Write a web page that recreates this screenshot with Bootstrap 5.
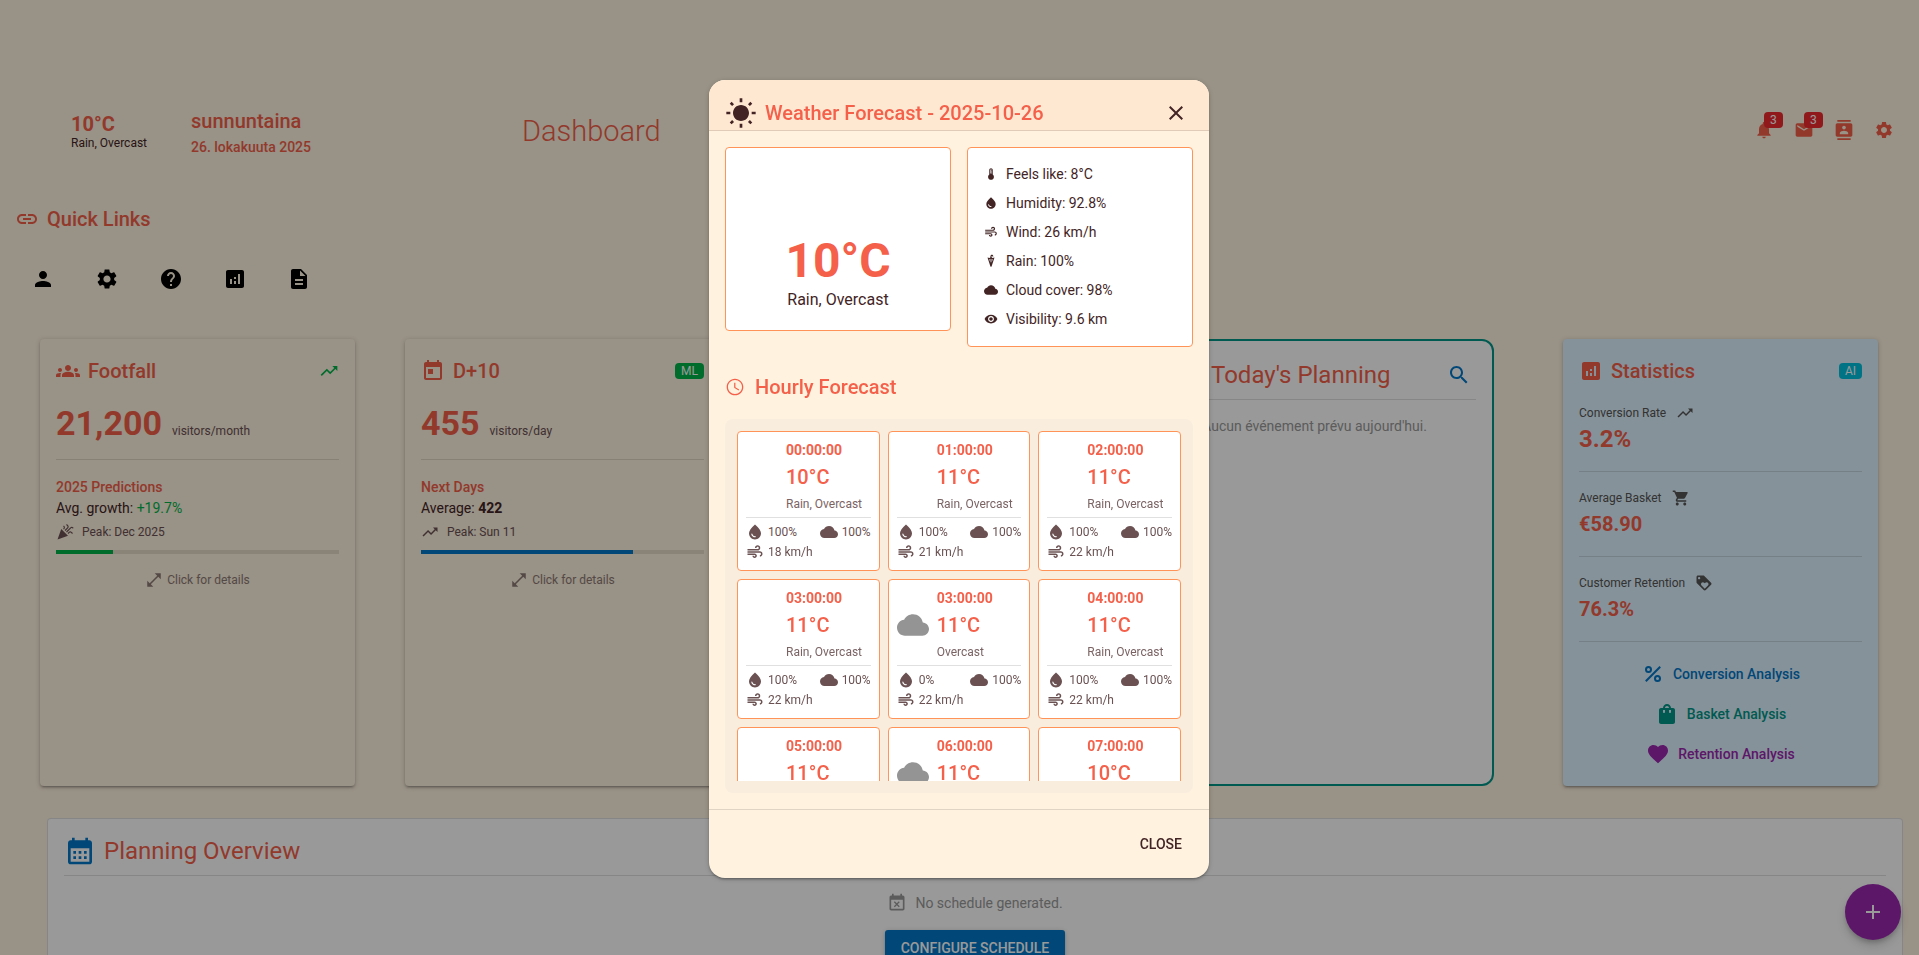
<!DOCTYPE html>
<html lang="en">
<head>
<meta charset="utf-8">
<meta name="viewport" content="width=device-width, initial-scale=1">
<title>Dashboard</title>
<link href="https://cdn.jsdelivr.net/npm/bootstrap@5.3.0/dist/css/bootstrap.min.css" rel="stylesheet">
<style>
:root{--coral:#f4604a;--ink:#432425;--ink-soft:#6b5152;--cream:#fff3e0;--line:rgba(0,0,0,.12);--teal:#009688;--blue:#0277c8;--green:#00b548;--orange:#ff9358}
body{font-family:Roboto,"Liberation Sans",sans-serif;font-size:14px;line-height:20px;color:var(--ink);background:var(--cream);overflow:hidden}
.ico{width:24px;height:24px;fill:currentColor;flex:none;display:block}
.ico-14{width:14px;height:14px}
.ico-18{width:18px;height:18px}
.ico-20{width:20px;height:20px}
.ico-32{width:32px;height:32px}
.plain-btn{background:none;border:0;padding:0;color:inherit;display:flex}
.coral{color:var(--coral)}
.green{color:var(--green)}
.blue{color:var(--blue)}
.teal{color:var(--teal)}
.purple{color:#9c27b0}
.gap-10{gap:10px}
.fs-12{font-size:12px}
.w-500{font-weight:500}
.title-20{font-size:20px;line-height:32px;font-weight:500;margin:0}
.title-24{font-size:24px;line-height:32px;font-weight:400;margin:0}
.soft{color:var(--ink-soft)}
.hint{color:#8d7a74}
.grey{color:#999}
.rule{border:0;border-top:1px solid #000;opacity:.12;margin:0}
.topbar{padding:102px 25px 0 15px;height:158px}
.topbar h1{font-size:29px;line-height:40px;font-weight:300;margin:0 0 0 209px;padding-top:2px}
.weather-chip{width:160px;padding:10px 8px 6px 56px;border-radius:8px;background:rgba(255,250,225,.3);line-height:16px}
.weather-chip b{font-size:20px;line-height:22px;font-weight:700}
.day-block{margin-left:16px;width:122px;padding-top:2px}
.counter{position:absolute;top:-8px;left:10px;padding:2px 6px;font-size:12px;line-height:12px;font-weight:400;border-radius:4px;background:#f02a2e;color:#fff}
.quick-head{padding:45px 15px 0}
.quick-row{padding:32px 31px 0;gap:40px;color:#000}
.board{display:grid;grid-template-columns:315fr 315fr 315fr 378fr 315fr;gap:50px;padding:48px 41px 0 40px}
.tile{min-height:447px;border-radius:4px;padding:16px;background:var(--cream);box-shadow:0 1px 5px rgba(0,0,0,.2),0 2px 2px rgba(0,0,0,.14),0 3px 1px -2px rgba(0,0,0,.12)}
.big-number{font-size:34px;line-height:40px;font-weight:700}
.trend-list{padding:17px 0 6px;line-height:21px}
.trend-list .peak{line-height:24px;margin-top:1px}
.tag{font-size:12px;line-height:12px;padding:2px 6px;border-radius:4px;color:#fff}
.today{background:#fff;border:2px solid var(--teal);border-radius:12px;padding:16px;margin-right:19px}
.today-head{height:36px;margin-bottom:6px;padding-right:5px}
.today-head h2{margin-left:26px}
.stats{background:#dff3ff;padding-bottom:11px}
.stats .label{color:#555;line-height:20px}
.stats-links{padding-top:12px}
.meter{height:4px;border-radius:0;background:rgba(0,0,0,.1)}
.link-btn{height:40px;font-weight:500;text-decoration:none;display:flex;align-items:center;justify-content:center;gap:8px}
.overview{margin:32px 16px 0 47px;padding:16px;background:#fff;border:1px solid rgba(0,0,0,.12);border-radius:4px;height:240px}
.empty-note{height:22px}
.cta{background:#0277c8;color:#fff;border-radius:3px;font-weight:500;font-size:14px;padding:7px 16px;line-height:22px;border:0;box-shadow:0 1px 5px rgba(0,0,0,.2),0 2px 2px rgba(0,0,0,.14)}
.fab{position:fixed;right:18px;bottom:15px;width:56px;height:56px;border-radius:50%;border:0;background:#9c27b0;color:#fff;display:flex;align-items:center;justify-content:center;box-shadow:0 3px 5px -1px rgba(0,0,0,.2),0 6px 10px rgba(0,0,0,.14)}
.modal-backdrop{--bs-backdrop-opacity:.4}
.modal{padding-right:1px}
.forecast{margin-top:80px}
.forecast .modal-content{background:var(--cream);border:0;border-radius:16px;color:var(--ink);box-shadow:0 1px 5px rgba(0,0,0,.2),0 2px 2px rgba(0,0,0,.14),0 3px 1px -2px rgba(0,0,0,.12)}
.forecast .modal-header{background:#ffe8d2;border-radius:16px 16px 0 0;padding:17px 21px 1px 16px;border-bottom:1px solid var(--line)}
.forecast .modal-body{padding:16px}
.forecast .modal-footer{padding:16px;height:69px;border-top:1px solid var(--line)}
.boxed{background:#fff;border:1px solid var(--orange);border-radius:4px}
.now{height:184px;padding-bottom:14px}
.now strong{font-size:48px;line-height:46px}
.facts{padding:11px 16px 13px}
.facts li{height:29px;display:flex;align-items:center;gap:8px}
.hours{border-radius:8px;padding:12px;background:#f9eddd}
.hours-scroll{height:350px;overflow-y:auto;scrollbar-width:none;display:grid;grid-template-columns:repeat(3,1fr);gap:8px}
.hour{padding:8px;height:140px;font-size:12px}
.hour-top{display:grid;grid-template-columns:32px 1fr;column-gap:8px;align-items:center;align-content:start;height:77px}
.hour .temp{font-size:20px;line-height:34px;font-weight:500}
.hour .sky{color:#7b6364}
.hour time{font-size:14px;line-height:20px;font-weight:700}
.hour dl{display:flex;flex-wrap:wrap;justify-content:space-between;margin:0;padding-top:4px}
.hour dl>div{display:flex;align-items:center;height:20px;gap:4px}
.hour dd{margin:0;line-height:18px}
.close-btn{border:0;background:none;color:var(--ink);font-weight:500;padding:8px 11px}
</style>
</head>
<body>
<svg width="0" height="0" class="position-absolute" aria-hidden="true">
<symbol id="sun" viewBox="0 0 24 24"><path d="M3.55 19.09L4.96 20.5L6.76 18.71L5.34 17.29M12 6C8.69 6 6 8.69 6 12S8.69 18 12 18 18 15.31 18 12C18 8.68 15.31 6 12 6M20 13H23V11H20M17.24 18.71L19.04 20.5L20.45 19.09L18.66 17.29M20.45 5L19.04 3.6L17.24 5.39L18.66 6.81M13 1H11V4H13M6.76 5.39L4.96 3.6L3.55 5L5.34 6.81L6.76 5.39M1 13H4V11H1M13 20H11V23H13"/></symbol>
<symbol id="link" viewBox="0 0 24 24"><path d="M3.9 12c0-1.71 1.39-3.1 3.1-3.1h4V7H7c-2.76 0-5 2.24-5 5s2.24 5 5 5h4v-1.9H7c-1.71 0-3.1-1.39-3.1-3.1zM8 13h8v-2H8v2zm9-6h-4v1.9h4c1.71 0 3.1 1.39 3.1 3.1s-1.39 3.1-3.1 3.1h-4V17h4c2.76 0 5-2.24 5-5s-2.24-5-5-5z"/></symbol>
<symbol id="person" viewBox="0 0 24 24"><path d="M12 12c2.21 0 4-1.79 4-4s-1.79-4-4-4-4 1.79-4 4 1.79 4 4 4zm0 2c-2.67 0-8 1.34-8 4v2h16v-2c0-2.66-5.33-4-8-4z"/></symbol>
<symbol id="cog" viewBox="0 0 24 24"><path d="M19.14 12.94c.04-.3.06-.61.06-.94 0-.32-.02-.64-.07-.94l2.03-1.58c.18-.14.23-.41.12-.61l-1.92-3.32c-.12-.22-.37-.29-.59-.22l-2.39.96c-.5-.38-1.03-.7-1.62-.94l-.36-2.54c-.04-.24-.24-.41-.48-.41h-3.84c-.24 0-.43.17-.47.41l-.36 2.54c-.59.24-1.13.57-1.62.94l-2.39-.96c-.22-.08-.47 0-.59.22L2.74 8.87c-.12.21-.08.47.12.61l2.03 1.58c-.05.3-.09.63-.09.94s.02.64.07.94l-2.03 1.58c-.18.14-.23.41-.12.61l1.92 3.32c.12.22.37.29.59.22l2.39-.96c.5.38 1.03.7 1.62.94l.36 2.54c.05.24.24.41.48.41h3.84c.24 0 .44-.17.47-.41l.36-2.54c.59-.24 1.13-.56 1.62-.94l2.39.96c.22.08.47 0 .59-.22l1.92-3.32c.12-.22.07-.47-.12-.61l-2.01-1.58zM12 15.6c-1.98 0-3.6-1.62-3.6-3.6s1.62-3.6 3.6-3.6 3.6 1.62 3.6 3.6-1.62 3.6-3.6 3.6z"/></symbol>
<symbol id="help" viewBox="0 0 24 24"><path d="M12 2C6.48 2 2 6.48 2 12s4.48 10 10 10 10-4.48 10-10S17.52 2 12 2zm1 17h-2v-2h2v2zm2.07-7.75l-.9.92C13.45 12.9 13 13.5 13 15h-2v-.5c0-1.1.45-2.1 1.17-2.83l1.24-1.26c.37-.36.59-.86.59-1.41 0-1.1-.9-2-2-2s-2 .9-2 2H8c0-2.21 1.79-4 4-4s4 1.79 4 4c0 .88-.36 1.68-.93 2.25z"/></symbol>
<symbol id="chart" viewBox="0 0 24 24"><path d="M19 3H5c-1.1 0-2 .9-2 2v14c0 1.1.9 2 2 2h14c1.1 0 2-.9 2-2V5c0-1.1-.9-2-2-2zM9 17H7v-5h2v5zm4 0h-2v-3h2v3zm0-5h-2v-2h2v2zm4 5h-2V7h2v10z"/></symbol>
<symbol id="doc" viewBox="0 0 24 24"><path d="M14 2H6c-1.1 0-1.99.9-1.99 2L4 20c0 1.1.89 2 1.99 2H18c1.1 0 2-.9 2-2V8l-6-6zm2 16H8v-2h8v2zm0-4H8v-2h8v2zm-3-5V3.5L18.5 9H13z"/></symbol>
<symbol id="groups" viewBox="0 0 24 24"><path d="M12 12.75c1.63 0 3.07.39 4.24.9 1.08.48 1.76 1.56 1.76 2.73V18H6v-1.61c0-1.18.68-2.26 1.76-2.73 1.17-.52 2.61-.91 4.24-.91zM4 13c1.1 0 2-.9 2-2s-.9-2-2-2-2 .9-2 2 .9 2 2 2zm1.13 1.1c-.37-.06-.74-.1-1.13-.1-.99 0-1.93.21-2.78.58C.48 14.9 0 15.62 0 16.43V18h4.5v-1.61c0-.83.23-1.61.63-2.29zM20 13c1.1 0 2-.9 2-2s-.9-2-2-2-2 .9-2 2 .9 2 2 2zm4 3.43c0-.81-.48-1.53-1.22-1.85-.85-.37-1.79-.58-2.78-.58-.39 0-.76.04-1.13.1.4.68.63 1.46.63 2.29V18H24v-1.57zM12 6c1.66 0 3 1.34 3 3s-1.34 3-3 3-3-1.34-3-3 1.34-3 3-3z"/></symbol>
<symbol id="trend" viewBox="0 0 24 24"><path d="M16 6l2.29 2.29-4.88 4.88-4-4L2 16.59 3.41 18l6-6 4 4 6.3-6.29L22 12V6z"/></symbol>
<symbol id="today" viewBox="0 0 24 24"><path d="M19 3h-1V1h-2v2H8V1H6v2H5c-1.11 0-1.99.9-1.99 2L3 19c0 1.1.89 2 2 2h14c1.1 0 2-.9 2-2V5c0-1.1-.9-2-2-2zm0 16H5V8h14v11zM7 10h5v5H7z"/></symbol>
<symbol id="party" viewBox="0 0 24 24"><path d="M2 22l14-5-9-9zM14.53 12.53l5.59-5.59c.49-.49 1.28-.49 1.77 0l.59.59 1.06-1.06-.59-.59c-1.07-1.07-2.82-1.07-3.89 0l-5.59 5.59 1.06 1.06zM10.06 6.88l-.59.59 1.06 1.06.59-.59c1.07-1.07 1.07-2.82 0-3.89l-.59-.59-1.06 1.07.59.59c.48.48.48 1.28 0 1.76zM17.06 11.88l-1.59 1.59 1.06 1.06 1.59-1.59c.49-.49 1.28-.49 1.77 0l1.61 1.61 1.06-1.06-1.61-1.61c-1.08-1.07-2.82-1.07-3.89 0zM15.06 5.88l-3.59 3.59 1.06 1.06 3.59-3.59c1.07-1.07 1.07-2.82 0-3.89l-1.59-1.59-1.06 1.06 1.59 1.59c.48.49.48 1.29 0 1.77z"/></symbol>
<symbol id="expand" viewBox="0 0 24 24"><path d="M21 11V3h-8l3.29 3.29-10 10L3 13v8h8l-3.29-3.29 10-10z"/></symbol>
<symbol id="search" viewBox="0 0 24 24"><path d="M15.5 14h-.79l-.28-.27C15.41 12.59 16 11.11 16 9.5 16 5.91 13.09 3 9.5 3S3 5.91 3 9.5 5.91 16 9.5 16c1.61 0 3.09-.59 4.23-1.57l.27.28v.79l5 4.99L20.49 19l-4.99-5zm-6 0C7.01 14 5 11.99 5 9.5S7.01 5 9.5 5 14 7.01 14 9.5 11.99 14 9.5 14z"/></symbol>
<symbol id="cart" viewBox="0 0 24 24"><path d="M7 18c-1.1 0-1.99.9-1.99 2S5.9 22 7 22s2-.9 2-2-.9-2-2-2zM1 2v2h2l3.6 7.59-1.35 2.45c-.16.28-.25.61-.25.96 0 1.1.9 2 2 2h12v-2H7.42c-.14 0-.25-.11-.25-.25l.03-.12.9-1.63h7.45c.75 0 1.41-.41 1.75-1.03l3.58-6.49c.08-.14.12-.31.12-.48 0-.55-.45-1-1-1H5.21l-.94-2H1zm16 16c-1.1 0-1.99.9-1.99 2s.89 2 1.99 2 2-.9 2-2-.9-2-2-2z"/></symbol>
<symbol id="loyalty" viewBox="0 0 24 24"><path d="M21.41 11.58l-9-9C12.05 2.22 11.55 2 11 2H4c-1.1 0-2 .9-2 2v7c0 .55.22 1.05.59 1.42l9 9c.36.36.86.58 1.41.58.55 0 1.05-.22 1.41-.59l7-7c.37-.36.59-.86.59-1.41 0-.55-.23-1.06-.59-1.42zM5.5 7C4.67 7 4 6.33 4 5.5S4.67 4 5.5 4 7 4.67 7 5.5 6.33 7 5.5 7zm11.77 8.27L13 19.54l-4.27-4.27C8.28 14.81 8 14.19 8 13.5c0-1.38 1.12-2.5 2.5-2.5.69 0 1.32.28 1.77.74l.73.72.73-.73c.45-.45 1.08-.73 1.77-.73 1.38 0 2.5 1.12 2.5 2.5 0 .69-.28 1.32-.73 1.77z"/></symbol>
<symbol id="percent" viewBox="0 0 24 24"><g fill="none" stroke="currentColor" stroke-width="2"><circle cx="7.5" cy="7.5" r="2.5"/><circle cx="16.5" cy="16.5" r="2.5"/><path d="M19.2 4.8L4.8 19.2"/></g></symbol>
<symbol id="bag" viewBox="0 0 24 24"><path d="M18 6h-2c0-2.21-1.79-4-4-4S8 3.79 8 6H6c-1.1 0-2 .9-2 2v12c0 1.1.9 2 2 2h12c1.1 0 2-.9 2-2V8c0-1.1-.9-2-2-2zm-8 4c0 .55-.45 1-1 1s-1-.45-1-1V8h2v2zm2-6c1.1 0 2 .9 2 2h-4c0-1.1.9-2 2-2zm4 6c0 .55-.45 1-1 1s-1-.45-1-1V8h2v2z"/></symbol>
<symbol id="heart" viewBox="0 0 24 24"><path d="M12 21.35l-1.45-1.32C5.4 15.36 2 12.28 2 8.5 2 5.42 4.42 3 7.5 3c1.74 0 3.41.81 4.5 2.09C13.09 3.81 14.76 3 16.5 3 19.58 3 22 5.42 22 8.5c0 3.78-3.4 6.86-8.55 11.54L12 21.35z"/></symbol>
<symbol id="month" viewBox="0 0 24 24"><path d="M19 4h-1V2h-2v2H8V2H6v2H5c-1.11 0-1.99.9-1.99 2L3 20c0 1.1.89 2 2 2h14c1.1 0 2-.9 2-2V6c0-1.1-.9-2-2-2zm0 16H5V10h14v10zM9 14H7v-2h2v2zm4 0h-2v-2h2v2zm4 0h-2v-2h2v2zm-8 4H7v-2h2v2zm4 0h-2v-2h2v2zm4 0h-2v-2h2v2z"/></symbol>
<symbol id="busy" viewBox="0 0 24 24"><path d="M9.31 17l2.44-2.44L14.19 17l1.06-1.06-2.44-2.44 2.44-2.44L14.19 10l-2.44 2.44L9.31 10l-1.06 1.06 2.44 2.44-2.44 2.44L9.31 17zM19 3h-1V1h-2v2H8V1H6v2H5c-1.11 0-1.99.9-1.99 2L3 19c0 1.1.89 2 2 2h14c1.1 0 2-.9 2-2V5c0-1.1-.9-2-2-2zm0 16H5V8h14v11z"/></symbol>
<symbol id="bell" viewBox="0 0 24 24"><path d="M12 22c1.1 0 2-.9 2-2h-4c0 1.1.89 2 2 2zm6-6v-5c0-3.07-1.64-5.64-4.5-6.32V4c0-.83-.67-1.5-1.5-1.5s-1.5.67-1.5 1.5v.68C7.63 5.36 6 7.92 6 11v5l-2 2v1h16v-1l-2-2z"/></symbol>
<symbol id="mail" viewBox="0 0 24 24"><path d="M20 4H4c-1.1 0-1.99.9-1.99 2L2 18c0 1.1.9 2 2 2h16c1.1 0 2-.9 2-2V6c0-1.1-.9-2-2-2zm0 4l-8 5-8-5V6l8 5 8-5v2z"/></symbol>
<symbol id="contacts" viewBox="0 0 24 24"><path d="M20 0H4v2h16V0zM4 24h16v-2H4v2zM20 4H4c-1.1 0-2 .9-2 2v12c0 1.1.9 2 2 2h16c1.1 0 2-.9 2-2V6c0-1.1-.9-2-2-2zm-8 2.75c1.24 0 2.25 1.01 2.25 2.25s-1.01 2.25-2.25 2.25S9.75 10.24 9.75 9 10.76 6.75 12 6.75zM17 17H7v-1.5c0-1.67 3.33-2.5 5-2.5s5 .83 5 2.5V17z"/></symbol>
<symbol id="clock" viewBox="0 0 24 24"><path d="M11.99 2C6.47 2 2 6.48 2 12s4.47 10 9.99 10C17.52 22 22 17.52 22 12S17.52 2 11.99 2zM12 20.4c-4.64 0-8.4-3.76-8.4-8.4s3.76-8.4 8.4-8.4 8.4 3.76 8.4 8.4-3.76 8.4-8.4 8.4zm.5-13.4H11v6l5.25 3.15.75-1.23-4.5-2.67z"/></symbol>
<symbol id="cloud" viewBox="0 0 24 24"><path d="M19.35 10.04C18.67 6.59 15.64 4 12 4 9.11 4 6.6 5.64 5.35 8.04 2.34 8.36 0 10.91 0 14c0 3.31 2.69 6 6 6h13c2.76 0 5-2.24 5-5 0-2.64-2.05-4.78-4.65-4.96z"/></symbol>
<symbol id="drop" viewBox="0 0 24 24"><path d="M12 2c-5.33 4.55-8 8.48-8 11.8 0 4.98 3.8 8.2 8 8.2s8-3.22 8-8.2c0-3.32-2.67-7.25-8-11.8zM7.83 14c.37 0 .67.26.74.62.41 2.22 2.28 2.98 3.64 2.87.43-.02.79.32.79.75 0 .4-.32.73-.72.75-2.13.13-4.62-1.09-5.19-4.12-.08-.45.28-.87.74-.87z"/></symbol>
<symbol id="air" viewBox="0 0 24 24"><path d="M14.5 17c0 1.65-1.35 3-3 3s-3-1.35-3-3h2c0 .55.45 1 1 1s1-.45 1-1-.45-1-1-1H2v-2h9.5c1.65 0 3 1.35 3 3zM19 6.5C19 4.57 17.43 3 15.5 3S12 4.57 12 6.5h2c0-.83.67-1.5 1.5-1.5s1.5.67 1.5 1.5S16.33 8 15.5 8H2v2h13.5c1.93 0 3.5-1.57 3.5-3.5zm-.5 4.5H2v2h16.5c.83 0 1.5.67 1.5 1.5s-.67 1.5-1.5 1.5v2c1.93 0 3.5-1.57 3.5-3.5S20.43 11 18.5 11z"/></symbol>
<symbol id="thermo" viewBox="0 0 24 24"><path d="M15 13V5c0-1.66-1.34-3-3-3S9 3.34 9 5v8c-1.21.91-2 2.37-2 4 0 2.76 2.24 5 5 5s5-2.24 5-5c0-1.63-.79-3.09-2-4zm-4-8c0-.55.45-1 1-1s1 .45 1 1h-1v1h1v2h-1v1h1v2h-2V5z"/></symbol>
<symbol id="umbrella" viewBox="0 0 24 24"><path d="M14.5 6.92L13 5.77V3.88c0-.26.22-.48.5-.48s.5.22.5.48v.5h2v-.5C16 2.51 14.88 1.4 13.5 1.4S11 2.51 11 3.88v1.89L9.5 6.92 6 6.07l5.05 15.25c.15.45.55.68.95.68s.8-.23.95-.69L18 6.07l-3.5.85zM13.28 8.5l.76.58.92-.23L13 14.8V8.29l.28.21zm-3.32.58l.76-.58.28-.21v6.51L9.03 8.86l.93.22z"/></symbol>
<symbol id="eye" viewBox="0 0 24 24"><path d="M12 4.5C7 4.5 2.73 7.61 1 12c1.73 4.39 6 7.5 11 7.5s9.27-3.11 11-7.5c-1.73-4.39-6-7.5-11-7.5zM12 17c-2.76 0-5-2.24-5-5s2.24-5 5-5 5 2.24 5 5-2.24 5-5 5zm0-8c-1.66 0-3 1.34-3 3s1.34 3 3 3 3-1.34 3-3-1.34-3-3-3z"/></symbol>
<symbol id="x" viewBox="0 0 24 24"><path d="M19 6.41L17.59 5 12 10.59 6.41 5 5 6.41 10.59 12 5 17.59 6.41 19 12 13.41 17.59 19 19 17.59 13.41 12z"/></symbol>
<symbol id="plus" viewBox="0 0 24 24"><path d="M19 13h-6v6h-2v-6H5v-2h6V5h2v6h6v2z"/></symbol>
</svg>

<header class="topbar d-flex align-items-center coral">
  <div class="weather-chip d-flex flex-column"><b>10°C</b><span class="fs-12" style="color:var(--ink)">Rain, Overcast</span></div>
  <div class="day-block text-nowrap"><div class="title-20">sunnuntaina</div><div class="w-500">26. lokakuuta 2025</div></div>
  <h1>Dashboard</h1>
  <nav class="d-flex ms-auto gap-3" aria-label="Account">
    <button class="plain-btn position-relative" aria-label="Notifications"><svg class="ico ico-20"><use href="#bell"/></svg><span class="counter">3</span></button>
    <button class="plain-btn position-relative ms-1" aria-label="Messages"><svg class="ico ico-20"><use href="#mail"/></svg><span class="counter">3</span></button>
    <button class="plain-btn ms-1" aria-label="Contacts"><svg class="ico ico-20"><use href="#contacts"/></svg></button>
    <button class="plain-btn ms-1" aria-label="Settings"><svg class="ico ico-20"><use href="#cog"/></svg></button>
  </nav>
</header>

<section>
  <div class="quick-head d-flex align-items-center gap-2 coral"><svg class="ico"><use href="#link"/></svg><h2 class="title-20">Quick Links</h2></div>
  <nav class="quick-row d-flex" aria-label="Quick links">
    <button class="plain-btn" aria-label="Profile"><svg class="ico"><use href="#person"/></svg></button>
    <button class="plain-btn" aria-label="Settings"><svg class="ico"><use href="#cog"/></svg></button>
    <button class="plain-btn" aria-label="Help"><svg class="ico"><use href="#help"/></svg></button>
    <button class="plain-btn" aria-label="Analytics"><svg class="ico"><use href="#chart"/></svg></button>
    <button class="plain-btn" aria-label="Documents"><svg class="ico"><use href="#doc"/></svg></button>
  </nav>
</section>

<main>
  <div class="board">
    <section class="tile">
      <div class="d-flex align-items-center gap-2 coral"><svg class="ico"><use href="#groups"/></svg><h2 class="title-20">Footfall</h2><svg class="ico ico-20 green ms-auto"><use href="#trend"/></svg></div>
      <div class="d-flex align-items-baseline gap-10 mt-3"><span class="big-number coral">21,200</span><span class="fs-12 soft">visitors/month</span></div>
      <hr class="rule mt-3">
      <div class="trend-list">
        <div class="coral w-500">2025 Predictions</div>
        <div>Avg. growth: <span class="green">+19.7%</span></div>
        <div class="peak d-flex align-items-center gap-2 fs-12 soft"><svg class="ico ico-18"><use href="#party"/></svg>Peak: Dec 2025</div>
      </div>
      <div class="progress meter" role="progressbar" aria-label="Growth"><div class="progress-bar" style="width:20%;background:var(--green)"></div></div>
      <div class="d-flex align-items-center justify-content-center gap-1 fs-12 hint mt-3"><svg class="ico ico-18"><use href="#expand"/></svg>Click for details</div>
    </section>
    <section class="tile">
      <div class="d-flex align-items-center gap-2 coral"><svg class="ico"><use href="#today"/></svg><h2 class="title-20">D+10</h2><span class="tag ms-auto" style="background:var(--green)">ML</span></div>
      <div class="d-flex align-items-baseline gap-10 mt-3"><span class="big-number coral">455</span><span class="fs-12 soft">visitors/day</span></div>
      <hr class="rule mt-3">
      <div class="trend-list">
        <div class="coral w-500">Next Days</div>
        <div>Average: <b>422</b></div>
        <div class="peak d-flex align-items-center gap-2 fs-12 soft"><svg class="ico ico-18"><use href="#trend"/></svg>Peak: Sun 11</div>
      </div>
      <div class="progress meter" role="progressbar" aria-label="Average"><div class="progress-bar" style="width:75%;background:var(--blue)"></div></div>
      <div class="d-flex align-items-center justify-content-center gap-1 fs-12 hint mt-3"><svg class="ico ico-18"><use href="#expand"/></svg>Click for details</div>
    </section>
    <section class="tile"></section>
    <section class="today">
      <div class="today-head d-flex align-items-center coral"><svg class="ico ico-32 teal"><use href="#today"/></svg><h2 class="title-24">Today's Planning</h2><button class="plain-btn blue ms-auto" aria-label="Search"><svg class="ico"><use href="#search"/></svg></button></div>
      <hr class="rule">
      <p class="grey text-center mt-3 mb-0">Aucun événement prévu aujourd'hui.</p>
    </section>
    <section class="tile stats">
      <div class="d-flex align-items-center gap-2 coral"><svg class="ico"><use href="#chart"/></svg><h2 class="title-20">Statistics</h2><span class="tag ms-auto" style="background:#00c0de">AI</span></div>
      <div class="mt-3"><div class="label fs-12 d-flex align-items-center gap-10">Conversion Rate <svg class="ico ico-18"><use href="#trend"/></svg></div><div class="coral title-24 fw-bold">3.2%</div></div>
      <hr class="rule my-3">
      <div><div class="label fs-12 d-flex align-items-center gap-10">Average Basket <svg class="ico ico-18"><use href="#cart"/></svg></div><div class="coral title-20 fw-bold">€58.90</div></div>
      <hr class="rule my-3">
      <div><div class="label fs-12 d-flex align-items-center gap-10">Customer Retention <svg class="ico ico-18"><use href="#loyalty"/></svg></div><div class="coral title-20 fw-bold">76.3%</div></div>
      <hr class="rule mt-3">
      <div class="stats-links">
        <a href="#" class="link-btn blue"><svg class="ico"><use href="#percent"/></svg>Conversion Analysis</a>
        <a href="#" class="link-btn teal"><svg class="ico"><use href="#bag"/></svg>Basket Analysis</a>
        <a href="#" class="link-btn purple"><svg class="ico"><use href="#heart"/></svg>Retention Analysis</a>
      </div>
    </section>
  </div>

  <section class="overview">
    <div class="d-flex align-items-center gap-2 pb-2"><svg class="ico ico-32 blue"><use href="#month"/></svg><h2 class="title-24 coral">Planning Overview</h2></div>
    <hr class="rule">
    <div class="empty-note d-flex align-items-center justify-content-center gap-2 mt-3 grey"><svg class="ico ico-20"><use href="#busy"/></svg>No schedule generated.</div>
    <div class="text-center mt-3"><button class="cta">CONFIGURE SCHEDULE</button></div>
  </section>
</main>
<button class="fab" aria-label="Add"><svg class="ico"><use href="#plus"/></svg></button>

<div class="modal-backdrop show"></div>
<div class="modal d-block" tabindex="-1" role="dialog" aria-labelledby="forecastTitle">
  <div class="modal-dialog forecast">
    <div class="modal-content">
      <div class="modal-header gap-2">
        <svg class="ico ico-32"><use href="#sun"/></svg>
        <h2 class="title-20 coral" id="forecastTitle">Weather Forecast - 2025-10-26</h2>
        <button class="plain-btn ms-auto" aria-label="Close"><svg class="ico"><use href="#x"/></svg></button>
      </div>
      <div class="modal-body">
        <div class="row g-3 align-items-start">
          <div class="col-6"><div class="boxed now d-flex flex-column align-items-center justify-content-end"><strong class="coral">10°C</strong><span class="fs-6 lh-lg">Rain, Overcast</span></div></div>
          <div class="col-6"><ul class="boxed facts list-unstyled mb-0">
            <li><svg class="ico ico-14"><use href="#thermo"/></svg>Feels like: 8°C</li>
            <li><svg class="ico ico-14"><use href="#drop"/></svg>Humidity: 92.8%</li>
            <li><svg class="ico ico-14"><use href="#air"/></svg>Wind: 26 km/h</li>
            <li><svg class="ico ico-14"><use href="#umbrella"/></svg>Rain: 100%</li>
            <li><svg class="ico ico-14"><use href="#cloud"/></svg>Cloud cover: 98%</li>
            <li><svg class="ico ico-14"><use href="#eye"/></svg>Visibility: 9.6 km</li>
          </ul></div>
        </div>
        <div class="d-flex align-items-center gap-10 coral mt-4 mb-3"><svg class="ico ico-20"><use href="#clock"/></svg><h3 class="title-20">Hourly Forecast</h3></div>
        <div class="hours"><div class="hours-scroll" id="hours"></div></div>
      </div>
      <div class="modal-footer"><button class="close-btn m-0">CLOSE</button></div>
    </div>
  </div>
</div>

<script src="https://cdn.jsdelivr.net/npm/bootstrap@5.3.0/dist/js/bootstrap.bundle.min.js"></script>
<script>
const forecast = [
  ['00:00:00', 10, 'Rain, Overcast', 100, 100, 18],
  ['01:00:00', 11, 'Rain, Overcast', 100, 100, 21],
  ['02:00:00', 11, 'Rain, Overcast', 100, 100, 22],
  ['03:00:00', 11, 'Rain, Overcast', 100, 100, 22],
  ['03:00:00', 11, 'Overcast', 0, 100, 22],
  ['04:00:00', 11, 'Rain, Overcast', 100, 100, 22],
  ['05:00:00', 11, 'Rain, Overcast', 100, 100, 22],
  ['06:00:00', 11, 'Overcast', 0, 100, 22],
  ['07:00:00', 10, 'Rain, Overcast', 100, 100, 22]
];
const icon = (name, size) => `<svg class="ico ${size}"><use href="#${name}"/></svg>`;
document.getElementById('hours').innerHTML = forecast.map(([time, temp, sky, rain, cover, wind]) => `
  <article class="boxed hour">
    <div class="hour-top">
      <div style="color:#949494">${sky === 'Overcast' ? icon('cloud', 'ico-32') : ''}</div>
      <div class="text-nowrap"><time class="coral d-block">${time}</time><div class="coral temp">${temp}°C</div><div class="sky">${sky}</div></div>
    </div>
    <hr class="rule">
    <dl class="soft">
      <div>${icon('drop', 'ico-18')}<dd>${rain}%</dd></div>
      <div>${icon('cloud', 'ico-18')}<dd>${cover}%</dd></div>
      <div>${icon('air', 'ico-18')}<dd>${wind} km/h</dd></div>
    </dl>
  </article>`).join('');
</script>
</body>
</html>
